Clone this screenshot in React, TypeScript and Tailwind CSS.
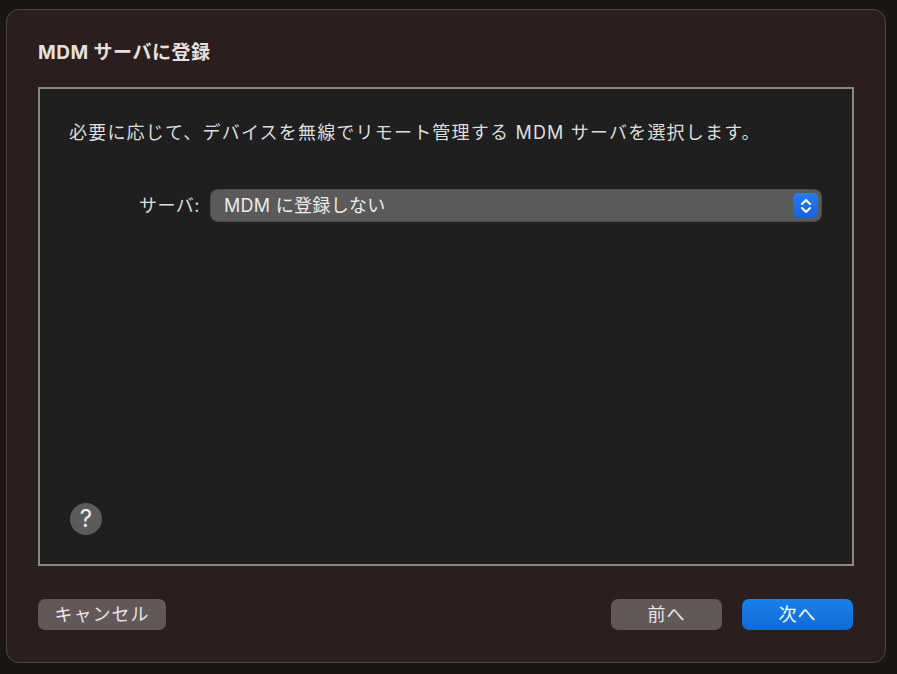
import React from "react";

const font = { fontFamily: '"Inter", "Noto Sans CJK JP", sans-serif' };

export default function App() {
  return (
    <div
      className="w-[897px] h-[674px] bg-[#1b1614] pt-[9px] pl-[6px] overflow-hidden"
      style={font}
    >
      <div className="w-[880px] h-[654px] rounded-[13px] border border-[#4e4543] bg-[#2a1f1e] px-[31px] pt-[30px] flex flex-col">
        <div className="text-[19px] leading-[26px] font-bold text-[#e4e0df] tracking-[0.5px]">
          MDM サーバに登録
        </div>
        <div className="mt-[21px] h-[479px] border-2 border-[#8a8685] bg-[#1f1f1f] flex flex-col px-[29px] pt-[32px] pb-[29px]">
          <div className="text-[18px] leading-[24px] text-[#dedede] tracking-[1.2px]">
            必要に応じて、デバイスを無線でリモート管理する MDM サーバを選択します。
          </div>
          <div className="mt-[45px] flex items-center">
            <div className="w-[131px] text-right text-[18px] leading-[24px] text-[#dedede] tracking-[0.5px]">
              サーバ:
            </div>
            <div className="ml-[11px] w-[610px] h-[31px] rounded-[7px] bg-[#5a5a5a] flex items-center pl-[13px] pr-[3px] shadow-[0_0_0_1px_#4c4c4c]">
              <div className="flex-1 text-[18px] leading-[24px] text-[#ececec] tracking-[0.3px]">
                MDM に登録しない
              </div>
              <div className="w-[25px] h-[25px] rounded-[5px] bg-gradient-to-b from-[#2a7cf0] to-[#1761d8] flex items-center justify-center">
                <svg width="14" height="18" viewBox="0 0 14 18" fill="none">
                  <path d="M3 7 L7 3 L11 7" stroke="white" strokeWidth="2" strokeLinecap="round" strokeLinejoin="round" />
                  <path d="M3 11 L7 15 L11 11" stroke="white" strokeWidth="2" strokeLinecap="round" strokeLinejoin="round" />
                </svg>
              </div>
            </div>
          </div>
          <div className="flex-1" />
          <div className="ml-[1px] w-[32px] h-[32px] rounded-full bg-[#5b5b5b] flex items-center justify-center text-[24px] leading-none text-[#f0f0f0]">
            ?
          </div>
        </div>
        <div className="mt-[33px] flex items-center">
          <div className="w-[128px] h-[31px] rounded-[7px] bg-[#625858] flex items-center justify-center text-[18px] text-[#e8e4e4] tracking-[1px]">
            キャンセル
          </div>
          <div className="flex-1" />
          <div className="w-[111px] h-[31px] rounded-[7px] bg-[#625858] flex items-center justify-center text-[18px] text-[#e8e4e4] tracking-[1px]">
            前へ
          </div>
          <div className="ml-[20px] mr-[1px] w-[111px] h-[31px] rounded-[7px] bg-gradient-to-b from-[#1a80ea] to-[#0f6bd8] flex items-center justify-center text-[18px] text-white tracking-[1px]">
            次へ
          </div>
        </div>
      </div>
    </div>
  );
}
